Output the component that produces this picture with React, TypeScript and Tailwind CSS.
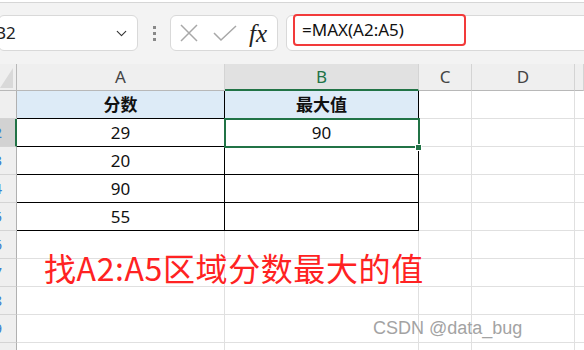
import { ChevronDown } from 'lucide-react';

const FONT = "font-['Noto_Sans','Noto_Sans_CJK_SC',sans-serif]";

const cols = ['A', 'B', 'C', 'D', ''];
const rows = [
  { n: 1, a: '分数', b: '最大值', head: true },
  { n: 2, a: '29', b: '90' },
  { n: 3, a: '20', b: '' },
  { n: 4, a: '90', b: '' },
  { n: 5, a: '55', b: '' },
  { n: 6 }, { n: 7 }, { n: 8 }, { n: 9 }, { n: 10 },
];

function Toolbar() {
  return (
    <div className="h-[62px] bg-[#f3f3f3] border-t border-[#d6d6d6] mt-[2px] relative">
      <div className="flex items-center h-[36px] mt-[12px]">
        {/* name box */}
        <div className="w-[140px] h-[36px] -ml-[2px] bg-white border border-[#d9d9d9] rounded-[6px] flex items-center justify-between pr-[7px] overflow-hidden">
          <span className="text-[17px] text-[#222] -ml-[4px]">B2</span>
          <ChevronDown size={17} strokeWidth={1.6} className="text-[#333]" />
        </div>
        <div className="w-[32px] flex flex-col items-center gap-[3px]">
          <span className="w-[3px] h-[3px] bg-[#888]" />
          <span className="w-[3px] h-[3px] bg-[#888]" />
          <span className="w-[3px] h-[3px] bg-[#888]" />
        </div>
        {/* fx buttons */}
        <div className="w-[108px] h-[36px] bg-white border border-[#d9d9d9] rounded-[6px] flex items-center pl-[8px]">
          <svg width="20" height="20" viewBox="0 0 20 20" className="text-[#a8a8a8]">
            <path d="M2 2L18 18M18 2L2 18" stroke="currentColor" strokeWidth="1.5" fill="none" />
          </svg>
          <svg width="26" height="18" viewBox="0 0 26 18" className="ml-[13px] text-[#a8a8a8]">
            <path d="M2 9L9 16L24 2" stroke="currentColor" strokeWidth="1.5" fill="none" />
          </svg>
          <span className="ml-[11px] text-[25px] leading-none italic text-[#222] font-['Liberation_Serif',serif]">fx</span>
        </div>
        {/* formula bar */}
        <div className="ml-[8px] flex-1 -mr-[20px] h-[36px] bg-white border border-[#d9d9d9] rounded-[6px] relative">
          <div className="absolute left-[6px] -top-[2px] w-[173px] h-[32px] border-2 border-[#f23a3a] rounded-[4px] flex items-center pl-[7px]">
            <span className="text-[17px] text-[#111]">=MAX(A2:A5)</span>
          </div>
        </div>
      </div>
    </div>
  );
}

function Sheet() {
  return (
    <div className="relative grid grid-cols-[17px_208px_194px_53px_103px_1fr]">
      {/* column header row */}
      <div className="h-[27px] bg-[#efefef] border-r border-[#b8b8b8] border-b border-b-[#b8b8b8] flex items-center">
        <svg width="14" height="20" viewBox="0 0 14 20" className="mt-[1px]">
          <path d="M13 0V20H0Z" fill="#d9d9d9" />
        </svg>
      </div>
      {cols.map((c) => (
        <div
          key={c || 'e'}
          className={
            c === 'B'
              ? 'h-[27px] bg-[#e1e1e1] border-r border-[#d4d4d4] border-b-2 border-b-[#217346] flex items-center justify-center text-[17px] text-[#217346]'
              : 'h-[27px] bg-[#efefef] border-r border-[#d4d4d4] border-b border-b-[#b8b8b8] flex items-center justify-center text-[17px] text-[#444]'
          }
        >
          {c}
        </div>
      ))}

      {rows.map((r) => {
        const inTable = r.n <= 5;
        return [
          <div
            key={`h${r.n}`}
            className={
              r.n === 2
                ? 'h-[28px] bg-[#d2d2d2] border-r-2 border-[#217346] border-b border-b-[#d4d4d4] flex items-center justify-end pr-[13px] overflow-hidden text-[15px] text-[#3a7fd0] whitespace-nowrap'
                : 'h-[28px] bg-[#efefef] border-r border-[#b0b0b0] border-b border-b-[#d4d4d4] flex items-center justify-end pr-[14px] overflow-hidden text-[15px] text-[#3a7fd0] whitespace-nowrap'
            }
          >
            {r.n}
          </div>,
          <div
            key={`a${r.n}`}
            className={
              inTable
                ? `h-[28px] border-r border-b border-black flex items-center justify-center text-[17px] text-[#111] ${r.head ? 'bg-[#ddebf7] font-bold' : ''}`
                : 'h-[28px] border-r border-b border-[#e0e0e0]'
            }
          >
            {r.a}
          </div>,
          <div
            key={`b${r.n}`}
            className={
              inTable
                ? `h-[28px] border-r border-b border-black flex items-center justify-center text-[17px] text-[#111] ${r.head ? 'bg-[#ddebf7] font-bold' : ''}`
                : 'h-[28px] border-r border-b border-[#e0e0e0]'
            }
          >
            {r.b}
          </div>,
          <div key={`c${r.n}`} className="h-[28px] border-r border-b border-[#e0e0e0]" />,
          <div key={`d${r.n}`} className="h-[28px] border-r border-b border-[#e0e0e0]" />,
          <div key={`e${r.n}`} className="h-[28px] border-b border-[#e0e0e0]" />,
        ];
      })}

      {/* selection on B2 */}
      <div className="absolute left-[224px] top-[54px] w-[196px] h-[30px] border-2 border-[#217346] pointer-events-none" />
      <div className="absolute left-[415px] top-[80px] w-[7px] h-[7px] bg-[#217346] border border-white" />

      {/* annotation */}
      <div className="absolute left-[44px] top-[187px] text-[32px] tracking-[0.6px] leading-none text-[#ff2222] whitespace-nowrap font-['Microsoft_YaHei','Noto_Sans_CJK_SC',sans-serif]">
        找A2:A5区域分数最大的值
      </div>
      <div className="absolute left-[373px] top-[255px] text-[18px] leading-none text-[#a3a3a3] whitespace-nowrap font-['Liberation_Sans',sans-serif]">
        CSDN @data_bug
      </div>
    </div>
  );
}

export default function App() {
  return (
    <div className={`w-[584px] h-[350px] overflow-hidden bg-white ${FONT}`}>
      <Toolbar />
      <Sheet />
    </div>
  );
}
